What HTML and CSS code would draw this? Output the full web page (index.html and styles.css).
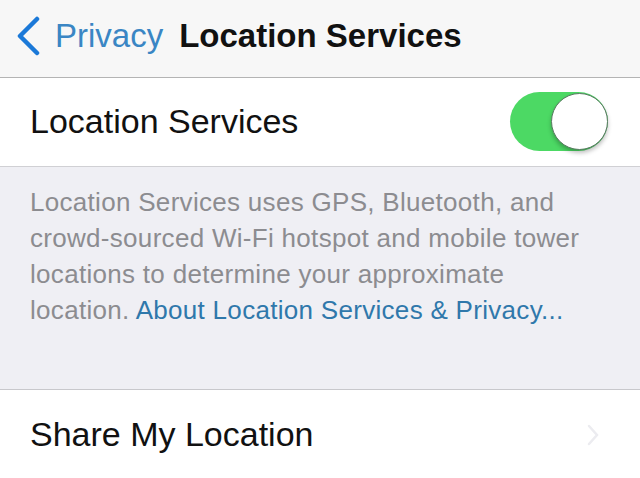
FILE: index.html
```html
<!DOCTYPE html>
<html>
<head>
	<title>Location Services</title>
	<meta charset="UTF-8">
	<link rel="stylesheet" href="styles.css">
</head>
<body>
	<header class="navbar">
		<a class="back" href="#">
			<svg class="back-chevron" width="26" height="40" viewBox="0 0 26 40">
				<path d="M22 3 L5 20 L22 37" fill="none" stroke="#1b79d8" stroke-width="4.5" stroke-linecap="round" stroke-linejoin="round"/>
			</svg>
			<span>Privacy</span>
		</a>
		<h1>Location Services</h1>
	</header>

	<div class="cell">
		<span class="cell-label">Location Services</span>
		<div class="switch">
			<div class="knob"></div>
		</div>
	</div>

	<section class="footer-note">
		<p>Location Services uses GPS, Bluetooth, and crowd-sourced Wi-Fi hotspot and mobile tower locations to determine your approximate location. <a href="#">About Location Services &amp; Privacy...</a></p>
	</section>

	<div class="cell cell-last">
		<span class="cell-label">Share My Location</span>
		<svg class="disclosure" width="14" height="24" viewBox="0 0 14 24">
			<path d="M3 3 L11 12 L3 21" fill="none" stroke="#ececf0" stroke-width="2.5" stroke-linecap="round"/>
		</svg>
	</div>
</body>
</html>
```

FILE: styles.css
```css
body {
	margin: 0;
	padding: 0;
	background-color: #efeff4;
	font-family: "Liberation Sans", Arial, sans-serif;
	overflow: hidden;
}
.navbar {
	height: 77px;
	background-color: #f7f7f7;
	border-bottom: 1px solid #b4b4b4;
	display: flex;
	align-items: center;
	padding-left: 15px;
	box-sizing: content-box;
}
.back {
	display: flex;
	align-items: center;
	text-decoration: none;
	color: #3a86c4;
	font-size: 33px;
	margin-top: -6px;
}
.back-chevron {
	margin-right: 14px;
}
.navbar h1 {
	margin: -6px 0 0 16px;
	font-size: 33px;
	font-weight: bold;
	color: #111;
}
.cell {
	height: 88px;
	background-color: #fff;
	display: flex;
	align-items: center;
	justify-content: space-between;
	padding: 0 32px 0 30px;
	border-bottom: 1px solid #d0d0d4;
}
.cell-last {
	border-bottom: none;
	height: 90px;
}
.cell-label {
	font-size: 34px;
	color: #111;
	margin-top: -2px;
}
.switch {
	width: 98px;
	height: 59px;
	border-radius: 30px;
	background-color: #4cd964;
	display: flex;
	align-items: center;
	justify-content: flex-end;
	margin-top: -2px;
}
.knob {
	width: 55px;
	height: 55px;
	border-radius: 50%;
	background-color: #fff;
	border: 1.5px solid #5a7a62;
	box-shadow: 0 3px 4px rgba(0, 0, 0, 0.25);
}
.footer-note {
	height: 223px;
	border-bottom: 1px solid #c8c8cc;
	padding: 0 40px 0 30px;
	box-sizing: border-box;
}
.footer-note p {
	margin: 0;
	padding-top: 17px;
	font-size: 26px;
	line-height: 36px;
	color: #8c8c90;
	letter-spacing: 0.3px;
}
.footer-note a {
	color: #2f78ab;
	text-decoration: none;
}
.disclosure {
	margin-right: 8px;
}
```
